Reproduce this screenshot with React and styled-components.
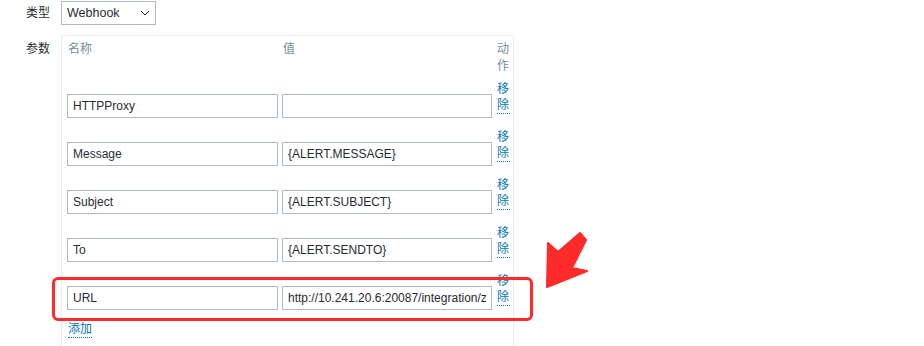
import React from 'react'
import styled, { createGlobalStyle } from 'styled-components'

const GlobalStyle = createGlobalStyle`
  html, body {
    margin: 0;
    padding: 0;
    background: #fff;
  }
  body {
    font-family: "Liberation Sans", Arial, "Noto Sans CJK SC", sans-serif;
    font-size: 12px;
    color: #1f2c33;
  }
`

const Page = styled.div`
  position: relative;
  width: 924px;
  height: 346px;
  overflow: hidden;
  padding-top: 1px;
  box-sizing: border-box;
`

const Form = styled.div`
  display: grid;
  grid-template-columns: 50px auto;
  column-gap: 11px;
  row-gap: 10px;
  align-items: start;
`

const Label = styled.div`
  text-align: right;
  line-height: ${p => p.$lh || 24}px;
  padding-top: ${p => p.$top || 0}px;
  white-space: nowrap;
`

const SelectBox = styled.div`
  width: 95px;
  height: 24px;
  box-sizing: border-box;
  border: 1px solid #acbbc2;
  display: flex;
  align-items: center;
  justify-content: space-between;
  padding: 0 5px 0 5px;
  font-size: 12.5px;
`

const Panel = styled.div`
  width: 453px;
  height: 340px;
  box-sizing: border-box;
  border: 1px solid #ebeef0;
  border-bottom: none;
  padding: 5px 3px 0 5px;
  display: flex;
  flex-direction: column;
`

const Grid = styled.div`
  display: grid;
  grid-template-columns: 211px 210px 14px;
  column-gap: 4px;
`

const HeaderRow = styled(Grid)`
  color: #768d99;
  line-height: 17px;
`

const HeadCell = styled.div`
  padding-left: 1px;
  word-break: break-all;
`

const ParamRow = styled(Grid)`
  align-items: end;
  margin-top: ${p => (p.$first ? 6 : 11)}px;
`

const TextInput = styled.input`
  width: 100%;
  height: 24px;
  box-sizing: border-box;
  border: 1px solid #acbbc2;
  padding: 0 5px;
  margin: 0;
  font-family: inherit;
  font-size: 12px;
  color: #1f2c33;
  background: #fff;
  outline: none;
`

const ActionLink = styled.span`
  display: inline-block;
  width: 13px;
  color: #0275b8;
  line-height: 16px;
  border-bottom: 1px dotted #0275b8;
  margin-bottom: 4px;
  margin-left: 1px;
  word-break: break-all;
  cursor: pointer;
`

const AddLink = styled.span`
  align-self: flex-start;
  margin-top: 11px;
  margin-left: 1px;
  color: #0275b8;
  line-height: 16px;
  border-bottom: 1px dotted #0275b8;
  cursor: pointer;
`

const Highlight = styled.div`
  position: absolute;
  left: 52px;
  top: 277px;
  width: 481px;
  height: 44px;
  box-sizing: border-box;
  border: 3px solid #ff2b2b;
  border-radius: 6px;
  pointer-events: none;
`

const Arrow = styled.svg`
  position: absolute;
  left: 540px;
  top: 228px;
  pointer-events: none;
`

const params = [
  { name: 'HTTPProxy', value: '' },
  { name: 'Message', value: '{ALERT.MESSAGE}' },
  { name: 'Subject', value: '{ALERT.SUBJECT}' },
  { name: 'To', value: '{ALERT.SENDTO}' },
  { name: 'URL', value: 'http://10.241.20.6:20087/integration/zabbix/alert' },
]

export default function App() {
  return (
    <Page>
      <GlobalStyle />
      <Form>
        <Label>类型</Label>
        <SelectBox>
          <span>Webhook</span>
          <svg width="10" height="6" viewBox="0 0 10 6">
            <polyline points="1,1 5,5 9,1" fill="none" stroke="#1f2c33" strokeWidth="1" />
          </svg>
        </SelectBox>

        <Label $lh={17} $top={6}>参数</Label>
        <Panel>
          <HeaderRow>
            <HeadCell>名称</HeadCell>
            <HeadCell>值</HeadCell>
            <HeadCell>动作</HeadCell>
          </HeaderRow>
          {params.map((p, i) => (
            <ParamRow key={p.name} $first={i === 0}>
              <TextInput readOnly value={p.name} />
              <TextInput readOnly value={p.value} />
              <ActionLink>移除</ActionLink>
            </ParamRow>
          ))}
          <AddLink>添加</AddLink>
        </Panel>
      </Form>

      <Highlight />
      <Arrow width="55" height="65" viewBox="0 0 55 65">
        <polygon
          points="7,59 8,15 18,24 40,5 46,12 32,40 47,43"
          fill="#ff2b2b"
          stroke="#ff2b2b"
          strokeWidth="2"
          strokeLinejoin="round"
        />
      </Arrow>
    </Page>
  )
}
